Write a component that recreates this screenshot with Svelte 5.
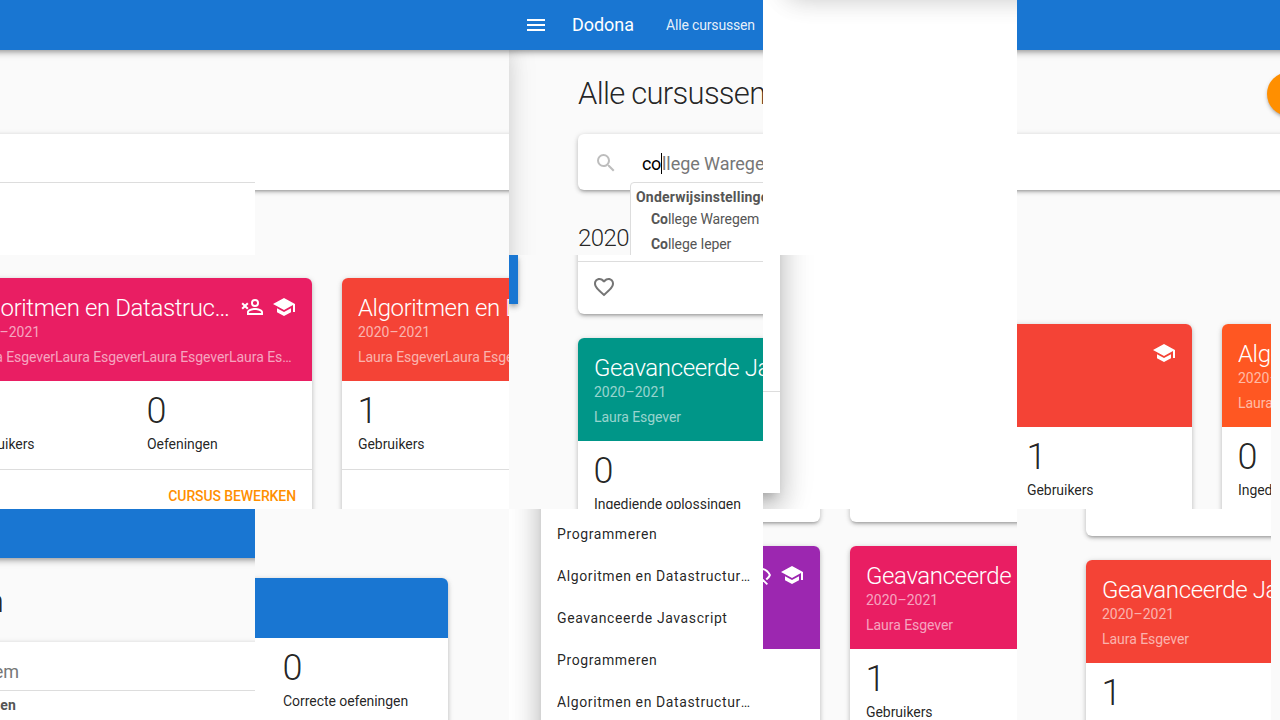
<script lang="ts">
  type Stat = [string, string];
  type Course = {
    color: string;
    title?: string;
    year?: string;
    teachers?: string;
    icons?: string[];
    stats?: Stat[];
    edit?: boolean;
  };

  const laura = 'Laura Esgever';
  const many = laura.repeat(8);
  const year = '2020–2021';

  const paths: Record<string, string> = {
    school: 'M12,3L1,9L12,15L21,10.09V17H23V9M5,13.18V17.18L12,21L19,17.18V13.18L12,17L5,13.18Z',
    unregistered:
      'M15,4A4,4 0 0,0 11,8A4,4 0 0,0 15,12A4,4 0 0,0 19,8A4,4 0 0,0 15,4M15,5.9A2.1,2.1 0 0,1 17.1,8A2.1,2.1 0 0,1 15,10.1A2.1,2.1 0 0,1 12.9,8A2.1,2.1 0 0,1 15,5.9M15,13C12.33,13 7,14.33 7,17V20H23V17C23,14.33 17.67,13 15,13M15,14.9C17.97,14.9 21.1,16.36 21.1,17V18.1H8.9V17C8.9,16.36 12,14.9 15,14.9M5,9.59L7.12,7.46L8.54,8.88L6.41,11L8.54,13.12L7.12,14.54L5,12.41L2.88,14.54L1.46,13.12L3.59,11L1.46,8.88L2.88,7.46L5,9.59Z',
    hidden:
      'M2,5.27L3.28,4L20,20.72L18.73,22L15.65,18.92C14.5,19.3 13.28,19.5 12,19.5C7,19.5 2.73,16.39 1,12C1.69,10.24 2.79,8.69 4.19,7.46L2,5.27M12,4.5C17,4.5 21.27,7.61 23,12C22.18,14.08 20.79,15.88 19,17.19L17.58,15.76C18.94,14.82 20.06,13.54 20.82,12C19.17,8.64 15.76,6.5 12,6.5C10.91,6.5 9.84,6.68 8.84,7L7.3,5.47C8.74,4.85 10.33,4.5 12,4.5Z',
    menu: 'M3,6H21V8H3V6M3,11H21V13H3V11M3,16H21V18H3V16Z',
    search:
      'M9.5,3A6.5,6.5 0 0,1 16,9.5C16,11.11 15.41,12.59 14.44,13.73L14.71,14H15.5L20.5,19L19,20.5L14,15.5V14.71L13.73,14.44C12.59,15.41 11.11,16 9.5,16A6.5,6.5 0 0,1 3,9.5A6.5,6.5 0 0,1 9.5,3M9.5,5C7,5 5,7 5,9.5C5,12 7,14 9.5,14C12,14 14,12 14,9.5C14,7 12,5 9.5,5Z',
    heart:
      'M12.1,18.55L12,18.65L11.89,18.55C7.14,14.24 4,11.39 4,8.5C4,6.5 5.5,5 7.5,5C9.04,5 10.54,6 11.07,7.36H12.93C13.46,6 14.96,5 16.5,5C18.5,5 20,6.5 20,8.5C20,11.39 16.86,14.24 12.1,18.55M16.5,3C14.76,3 13.09,3.81 12,5.08C10.91,3.81 9.24,3 7.5,3C4.42,3 2,5.41 2,8.5C2,12.27 5.4,15.36 10.55,20.03L12,21.35L13.45,20.03C18.6,15.36 22,12.27 22,8.5C22,5.41 19.58,3 16.5,3Z'
  };

  const menuItems = [
    'Programmeren',
    'Algoritmen en Datastructuren',
    'Geavanceerde Javascript',
    'Programmeren',
    'Algoritmen en Datastructuren'
  ];
</script>

{#snippet icon(name: string)}
  <svg class="icon" viewBox="0 0 24 24" width="24" height="24"><path d={paths[name]} /></svg>
{/snippet}

{#snippet course(c: Course)}
  <article class="card course">
    <header style="background:{c.color}">
      <div class="titlebar">
        <h3>{c.title ?? ''}</h3>
        {#each c.icons ?? [] as name}{@render icon(name)}{/each}
      </div>
      <p class="year">{c.year ?? ''}</p>
      <p class="teachers">{c.teachers ?? ''}</p>
    </header>
    <div class="stats">
      {#each c.stats ?? [] as [n, label]}
        <div class="stat"><b>{n}</b><span>{label}</span></div>
      {/each}
    </div>
    <footer>{#if c.edit}<a href="#edit">Cursus bewerken</a>{/if}</footer>
  </article>
{/snippet}

<main>
  <section class="tile page">
    <div class="bar"></div>
    <div class="search square"></div>
    <div class="results plain"></div>
  </section>

  <section class="tile page">
    <div class="bar"></div>
    <div class="search square"></div>
  </section>

  <section class="tile page home">
    <div class="drawer-edge"></div>
    <nav class="bar">
      {@render icon('menu')}
      <span class="brand">Dodona</span>
      <span class="link">Alle cursussen</span>
    </nav>
    <h1>Alle cursussen</h1>
    <div class="search">
      {@render icon('search')}
      <div class="field"><span class="typed">co</span><span class="hint">llege Waregem</span></div>
      <div class="results">
        <strong>Onderwijsinstellingen</strong>
        <p><b>Co</b>llege Waregem</p>
        <p><b>Co</b>llege Ieper</p>
      </div>
    </div>
    <h2>2020</h2>
  </section>

  <section class="tile white"><div class="sheet above"></div></section>

  <section class="tile page wide">
    <div class="bar"></div>
    <div class="fab"></div>
    <div class="search square"></div>
  </section>

  <section class="tile span2 list-a">
    {@render course({ color: '#e91e63', title: 'Algoritmen en Datastructuren', year, teachers: many, icons: ['unregistered', 'school'], stats: [['1', 'Gebruikers'], ['0', 'Oefeningen']], edit: true })}
    {@render course({ color: '#f44336', title: 'Algoritmen en Datastructuren', year, teachers: many, icons: ['school'], stats: [['1', 'Gebruikers']] })}
  </section>

  <section class="tile list-b">
    <div class="bar-end"></div>
    <div class="column">
      <div class="card tail"><div>{@render icon('heart')}</div></div>
      {@render course({ color: '#009688', title: 'Geavanceerde Javascript', year, teachers: laura, stats: [['0', 'Ingediende oplossingen']] })}
    </div>
  </section>

  <section class="tile white"><div class="sheet corner"><hr /></div></section>

  <section class="tile list-c">
    {@render course({ color: '#f44336', icons: ['school'], stats: [['', ''], ['1', 'Gebruikers']] })}
    {@render course({ color: '#ff5722', title: 'Algoritmen en Datastructuren', year, teachers: many, stats: [['0', 'Ingediende']] })}
  </section>

  <section class="tile"></section>

  <section class="tile page lower">
    <div class="bar"></div>
    <h1>Alle cursussen</h1>
    <div class="search square"><div class="field"><span class="hint">Waregem</span></div></div>
    <div class="results plain"><strong>Onderwijsinstellingen</strong></div>
  </section>

  <section class="tile summary">
    <article class="card">
      <header></header>
      <div class="stats"><div class="stat"><b>0</b><span>Correcte oefeningen</span></div></div>
    </article>
  </section>

  <section class="tile white">
    <ul class="sheet menu">
      {#each menuItems as item}<li>{item}</li>{/each}
    </ul>
  </section>

  <section class="tile list-d">
    <div class="card end"></div>
    <div class="card end"></div>
    {@render course({ color: '#9c27b0', icons: ['hidden', 'school'] })}
    {@render course({ color: '#e91e63', title: 'Geavanceerde Javascript', year, teachers: laura, stats: [['1', 'Gebruikers']] })}
  </section>

  <section class="tile list-e">
    <div class="card end"></div>
    {@render course({ color: '#f44336', title: 'Geavanceerde Javascript', year, teachers: laura, stats: [['1', 'Gebruikers']] })}
  </section>

  <section class="tile"></section>
</main>

<style>
  :global(body) { background: #fafafa; overflow: hidden; }
  main, main * { box-sizing: border-box; }
  main {
    width: 1280px;
    height: 720px;
    display: grid;
    grid-template-columns: 255px repeat(4, 254px) 9px;
    grid-template-rows: 255px 254px 211px;
    font: 14px/20px Roboto, "Liberation Sans", sans-serif;
    letter-spacing: -.05px;
    color: rgba(0, 0, 0, 0.87);
  }
  h1, h2, h3, p, ul { margin: 0; padding: 0; font-weight: 300; }
  .tile { overflow: hidden; position: relative; background: #fafafa; min-width: 0; min-height: 0; }
  .white { background: #fff; }
  .span2, .wide { grid-column: span 2; }
  .icon { display: block; flex: none; fill: currentColor; }

  .bar {
    height: 50px;
    margin: 0 -20px;
    background: #1976d2;
    color: #fff;
    position: relative;
    z-index: 2;
    box-shadow: 0 2px 4px -1px rgba(0,0,0,.2), 0 4px 5px rgba(0,0,0,.14), 0 1px 10px rgba(0,0,0,.12);
  }
  .card, .search {
    background: #fff;
    border-radius: 6px;
    box-shadow: 0 3px 3px -2px rgba(0,0,0,.2), 0 2px 4px rgba(0,0,0,.16), 0 1px 6px rgba(0,0,0,.12);
  }
  .search { height: 56px; }
  .square { margin: 84px -20px 0; }
  .results {
    position: absolute;
    background: #fff;
    border: 1px solid #ddd;
    color: #555;
  }
  .results.plain { top: 182px; left: -5px; right: -5px; height: 90px; }

  .home .bar { display: flex; align-items: center; padding-left: 35px; }
  .brand { font-size: 18px; margin-left: 24px; width: 94px; }
  .link { letter-spacing: -.16px; color: rgba(255,255,255,.9); white-space: nowrap; }
  .drawer-edge {
    position: absolute;
    top: 40px;
    bottom: -60px;
    left: -107px;
    width: 100px;
    box-shadow: 0 8px 10px -5px rgba(0,0,0,.2), 0 16px 24px 2px rgba(0,0,0,.14), 0 6px 30px 5px rgba(0,0,0,.12);
  }
  h1 { font-size: 31px; letter-spacing: -.72px; line-height: 40px; white-space: nowrap; }
  .home h1 { margin: 24px 0 0 69px; }
  .home .search {
    position: relative;
    display: flex;
    margin: 20px -20px 0 69px;
    padding: 17px 16px 0;
    z-index: 1;
  }
  .home .search > .icon { color: #bdbdbd; }
  .field { font-size: 18px; line-height: 21px; height: 22px; overflow: hidden; white-space: nowrap; color: #000; }
  .home .field { margin: 2px 0 0 24px; }
  .typed { display: inline-block; height: 21px; width: 20px; border-right: 1px solid #000; vertical-align: top; letter-spacing: -.3px; }
  .hint { color: #777; }
  .home .results { left: 52px; top: 48px; width: 220px; height: 100px; border-radius: 4px; padding: 4px 5px; }
  .results strong { letter-spacing: .2px; display: block; }
  .results p { font-weight: 400; padding-left: 15px; line-height: 25px; letter-spacing: -.08px; }
  h2 { font-size: 24px; letter-spacing: -.6px; line-height: 32px; margin: 32px 0 0 69px; }
  .fab {
    position: absolute;
    left: 250px;
    top: 72px;
    width: 44px;
    height: 44px;
    border-radius: 50%;
    background: #ff8f00;
    box-shadow: 0 2px 3px -1px rgba(0,0,0,.2), 0 2px 4px rgba(0,0,0,.2);
  }

  .sheet {
    background: #fff;
    box-shadow: 0 8px 10px -5px rgba(0,0,0,.2), 0 16px 24px 2px rgba(0,0,0,.14), 0 6px 30px 5px rgba(0,0,0,.12);
  }
  .above { height: 300px; margin: -318px -60px 0 28px; }
  .corner { height: 338px; width: 117px; margin: -100px 0 0 -100px; padding-top: 236px; }
  .corner hr { margin: 0; border: 0; height: 1px; background: #ddd; }
  .menu { margin: -60px -60px 0 32px; padding: 64px 0 60px 16px; list-style: none; }
  .menu li {
    width: 194px;
    line-height: 42px;
    font-weight: 400;
    letter-spacing: .6px;
    white-space: nowrap;
    overflow: hidden;
    text-overflow: ellipsis;
  }

  .course { width: 360px; flex: none; overflow: hidden; }
  .course header { height: 103px; padding: 16px 16px 0; color: rgba(255,255,255,.6); }
  .titlebar { display: flex; gap: 8px; height: 28px; align-items: flex-start; color: #fff; }
  .titlebar :global(.icon) { margin-top: 1px; }
  h3 { flex: 1; min-width: 0; font-size: 24px; line-height: 28px; letter-spacing: -.38px; }
  h3, .teachers { white-space: nowrap; overflow: hidden; text-overflow: ellipsis; }
  .year, .teachers { font-weight: 400; height: 20px; }
  .year { letter-spacing: 0; }
  .teachers { margin-top: 5px; }
  .stats { height: 88px; padding: 10px 16px 0; display: flex; gap: 30px; }
  .stat { width: 149px; flex: none; white-space: nowrap; }
  .stat b { display: block; font-size: 36px; line-height: 40px; height: 43px; font-weight: 300; margin-left: -.5px; }
  footer {
    height: 53px;
    border-top: 1px solid #ddd;
    display: flex;
    justify-content: flex-end;
    align-items: center;
    padding: 0 16px;
  }
  footer a { color: #ff8f00; font-weight: 500; text-transform: uppercase; text-decoration: none; letter-spacing: -.1px; }

  .list-a { display: flex; gap: 30px; padding-top: 23px; align-items: flex-start; }
  .list-a > :global(:first-child) { margin-left: -48px; }
  .list-b { display: flex; align-items: flex-start; }
  .bar-end { flex: none; width: 9px; height: 49px; background: #1976d2; box-shadow: 0 2px 4px -1px rgba(0,0,0,.2), 0 4px 5px rgba(0,0,0,.14), 0 1px 10px rgba(0,0,0,.12); }
  .column { margin: -14px 0 0 60px; display: flex; flex-direction: column; gap: 24px; }
  .tail { height: 73px; padding-top: 20px; }
  .tail div { height: 53px; border-top: 1px solid #ddd; padding: 13px 14px; color: #757575; }
  .list-c { display: flex; gap: 30px; padding-top: 69px; margin: 0; align-items: flex-start; }
  .list-c > :global(:first-child) { margin-left: -185px; }
  .lower .bar { height: 49px; }
  .lower h1 { margin: 24px auto 0 0; width: 3px; display: flex; justify-content: flex-end; }
  .lower .square { margin-top: 20px; padding: 19px 20px; }
  .lower .field { margin-left: -57px; }
  .lower .results { top: 181px; padding: 4px 0; height: 60px; }
  .lower strong { width: 20px; display: flex; justify-content: flex-end; }
  .summary { padding-top: 69px; }
  .summary .card { width: 360px; height: 240px; margin-left: -167px; overflow: hidden; }
  .summary header { height: 60px; background: #1976d2; }
  .summary .stats { padding-left: 195px; }
  .list-d { display: grid; grid-template-columns: 360px 360px; grid-auto-rows: max-content; column-gap: 30px; row-gap: 24px; align-content: start; }
  .list-d > :global(*) { position: relative; left: -303px; }
  .end { height: 60px; margin-top: -47px; }
  .list-e { display: grid; grid-template-columns: 360px; grid-auto-rows: max-content; row-gap: 24px; align-content: start; padding-left: 69px; }
  .list-e .end { margin-top: -33px; }
</style>
